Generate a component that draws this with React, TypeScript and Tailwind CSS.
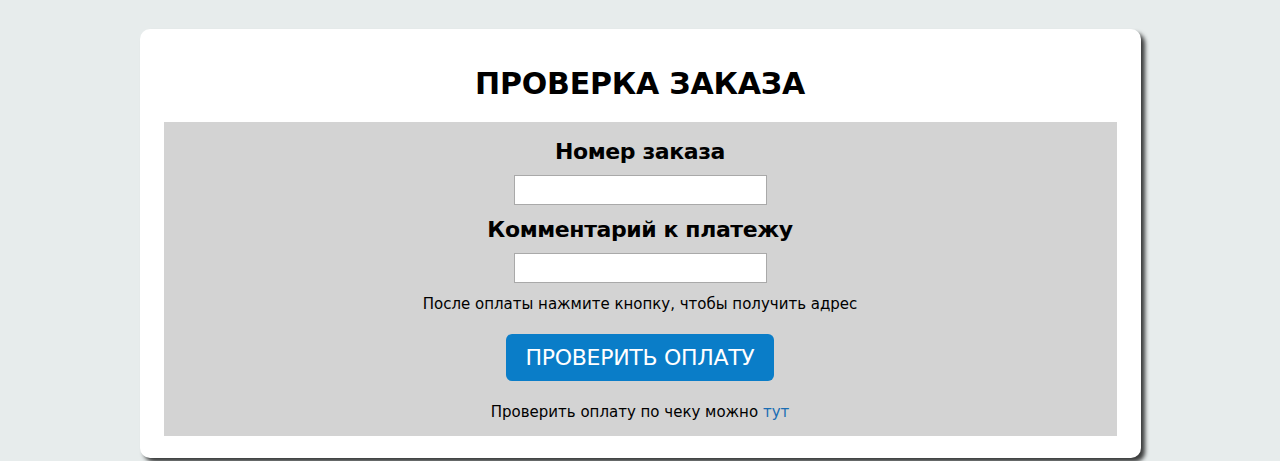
export default function App() {
  return (
    <div
      className="min-h-[461px] bg-[#e7ecec] pt-[29px]"
      style={{ fontFamily: '"DejaVu Sans", Verdana, sans-serif' }}
    >
      <div className="mx-auto w-[1001px] rounded-[10px] bg-white px-6 pt-[35px] pb-[22px] shadow-[4px_4px_4px_rgba(0,0,0,0.75)]">
        <h1 className="mb-[18px] text-center text-[30px] leading-[40px] font-bold tracking-[-0.2px] text-black">
          ПРОВЕРКА ЗАКАЗА
        </h1>
        <div className="flex flex-col items-center bg-[#d3d3d3] pt-[17px] pb-[14px] text-black">
          <label className="text-[22px] leading-[26px] font-bold tracking-[-0.4px]">
            Номер заказа
          </label>
          <input
            type="text"
            className="mt-[10px] h-[30px] w-[253px] border border-[#a9a9a9] bg-white outline-none"
          />
          <label className="mt-3 text-[22px] leading-[26px] font-bold tracking-[-0.4px]">
            Комментарий к платежу
          </label>
          <input
            type="text"
            className="mt-[10px] h-[30px] w-[253px] border border-[#a9a9a9] bg-white outline-none"
          />
          <p className="mt-[11px] text-[15px] leading-[20px]">
            После оплаты нажмите кнопку, чтобы получить адрес
          </p>
          <button className="mt-5 h-[47px] w-[268px] rounded-[6px] bg-[#0a7dc8] text-[22px] tracking-[-0.3px] text-white">
            ПРОВЕРИТЬ ОПЛАТУ
          </button>
          <p className="mt-[21px] text-[15px] leading-[20px]">
            Проверить оплату по чеку можно{" "}
            <a href="#" className="text-[#1a6db3]">
              тут
            </a>
          </p>
        </div>
      </div>
    </div>
  );
}
